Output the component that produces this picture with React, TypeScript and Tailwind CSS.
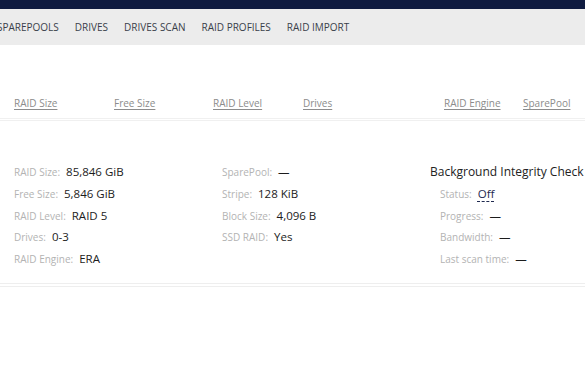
const font = { fontFamily: '"Open Sans", "Liberation Sans", sans-serif' };

const navItems = ['Sparepools', 'Drives', 'Drives Scan', 'RAID Profiles', 'RAID Import'];

function Row({ label, value, children }: { label: string; value?: string; children?: React.ReactNode }) {
  return (
    <div className="flex items-baseline h-[21.75px] leading-[21.75px]">
      <span className="text-[10px] text-[#b3b3b3]">{label}:</span>
      <span className="ml-[6px] text-[11.5px] font-medium text-[#1c1c1c]">{children ?? value}</span>
    </div>
  );
}

export default function App() {
  return (
    <div className="w-[585px] h-[390px] bg-white overflow-hidden" style={font}>
      <div className="h-[9px] bg-[#0f1b40]" />
      <nav className="h-[36px] bg-[#ececec] flex items-center gap-[16px] -ml-[3px]">
        {navItems.map((item) => (
          <span key={item} className="text-[10px] uppercase text-[#3a3f4a] whitespace-nowrap">
            {item}
          </span>
        ))}
      </nav>

      {/* table header */}
      <div className="flex items-center pl-[14px] pt-[51px] pb-[7px] text-[10px] text-[#8c8c8c]">
        <span className="w-[100px] underline underline-offset-2">RAID Size</span>
        <span className="w-[99px] underline underline-offset-2">Free Size</span>
        <span className="w-[90px] underline underline-offset-2">RAID Level</span>
        <span className="w-[141px] underline underline-offset-2">Drives</span>
        <span className="w-[79px] underline underline-offset-2">RAID Engine</span>
        <span className="underline underline-offset-2">SparePool</span>
      </div>
      <div className="h-[3px] border-y border-[#f0f0f0]" />

      {/* details */}
      <div className="flex pl-[14px] pt-[40px] pb-[13px]">
        <div className="w-[208px]">
          <Row label="RAID Size" value="85,846 GiB" />
          <Row label="Free Size" value="5,846 GiB" />
          <Row label="RAID Level" value="RAID 5" />
          <Row label="Drives" value="0-3" />
          <Row label="RAID Engine" value="ERA" />
        </div>
        <div className="w-[208px]">
          <Row label="SparePool" value="—" />
          <Row label="Stripe" value="128 KiB" />
          <Row label="Block Size" value="4,096 B" />
          <Row label="SSD RAID" value="Yes" />
        </div>
        <div className="flex-1">
          <div className="h-[21.75px] leading-[21.75px] text-[12px] text-[#222] whitespace-nowrap">
            Background Integrity Check
          </div>
          <div className="pl-[10px]">
            <Row label="Status">
              <span className="text-[#1f2a50] font-medium underline decoration-dashed underline-offset-[3px] decoration-[#1f2a50]">
                Off
              </span>
            </Row>
            <Row label="Progress" value="—" />
            <Row label="Bandwidth" value="—" />
            <Row label="Last scan time" value="—" />
          </div>
        </div>
      </div>
      <div className="h-[4px] border-y border-[#eeeeee]" />
    </div>
  );
}
